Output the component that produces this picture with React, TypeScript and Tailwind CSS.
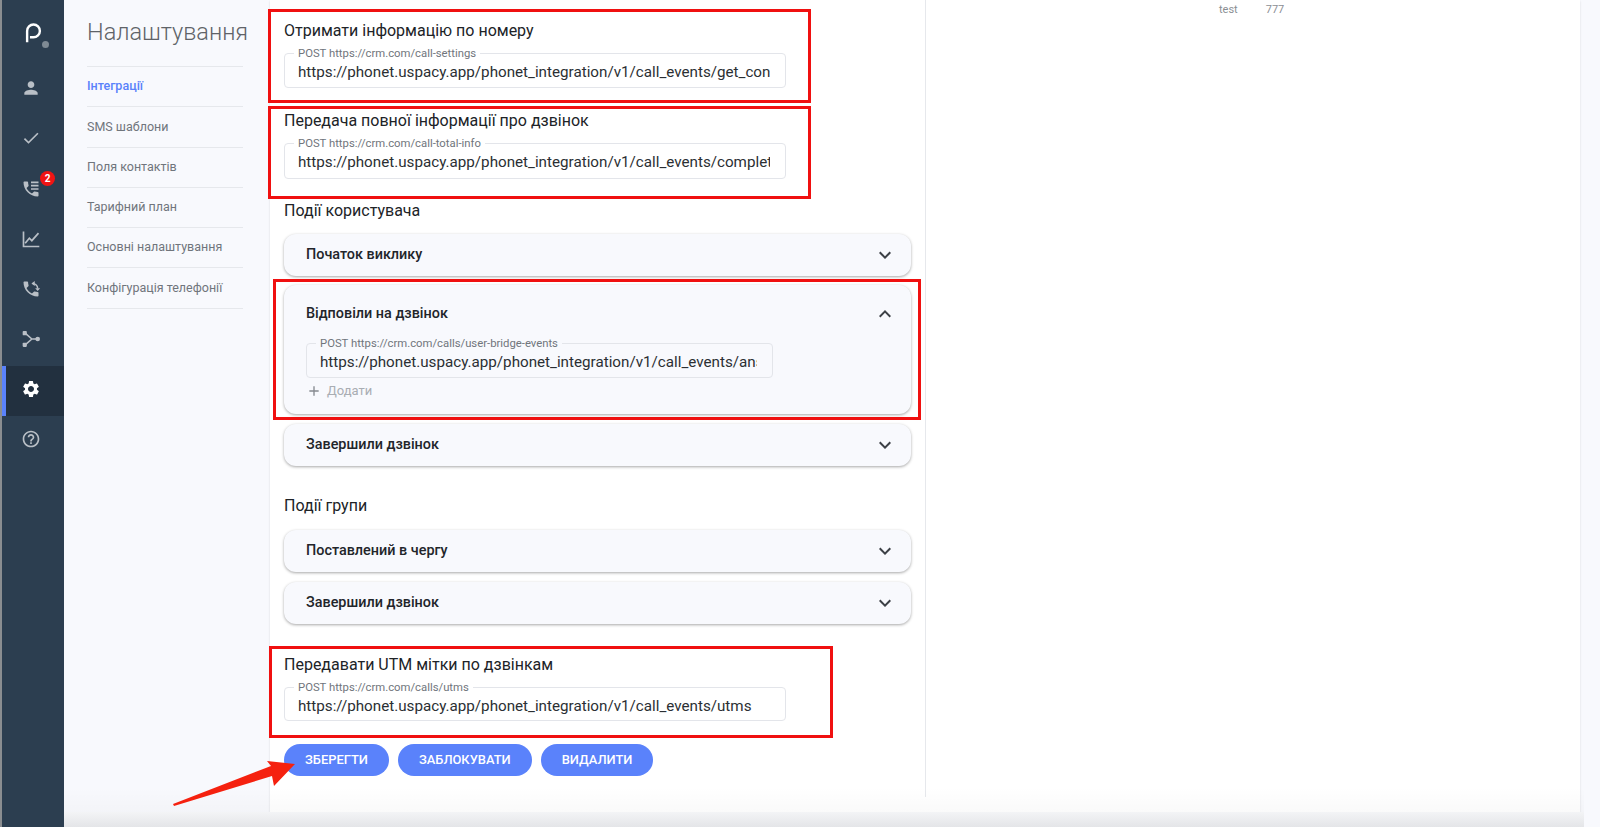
import { MdPerson, MdCheck, MdSettings, MdHelpOutline, MdExpandMore, MdExpandLess, MdAdd } from 'react-icons/md';

const phonePath =
  'M20 15.5c-1.25 0-2.45-.2-3.57-.57-.35-.11-.74-.03-1.02.24l-2.2 2.2c-2.83-1.44-5.15-3.75-6.59-6.59l2.2-2.21c.28-.26.36-.65.25-1C8.7 6.45 8.5 5.25 8.5 4c0-.55-.45-1-1-1H4c-.55 0-1 .45-1 1 0 9.39 7.61 17 17 17 .55 0 1-.45 1-1v-3.5c0-.55-.45-1-1-1z';

const PhoneListIcon = () => (
  <svg viewBox="0 0 24 24" width="20" height="20" fill="currentColor">
    <path d={phonePath} />
    <path d="M12 3h9v2h-9zM12 7h9v2h-9zM12 11h9v2h-9z" />
  </svg>
);

const PhoneSwapIcon = () => (
  <svg viewBox="0 0 24 24" width="20" height="20" fill="currentColor">
    <path d={phonePath} />
    <path d="M14 5.500a6 6 0 0 1 6 6" fill="none" stroke="currentColor" strokeWidth="1.800" />
    <path d="M16.500 2.500v6l-4-3zM17 11h6l-3 3.500z" />
  </svg>
);

const ChartIcon = () => (
  <svg viewBox="0 0 24 24" width="20" height="20" fill="none" stroke="currentColor" strokeWidth="2">
    <path d="M3 3v18h19" />
    <path d="M5 17l5-6 3 3 8-9" />
  </svg>
);

const BranchIcon = () => (
  <svg viewBox="0 0 24 24" width="20" height="20" fill="currentColor">
    <path d="M5 5l8 7-8 7M13 12h6" fill="none" stroke="currentColor" strokeWidth="1.800" />
    <rect x="2" y="2.500" width="5" height="5" rx="1" />
    <rect x="2" y="16.500" width="5" height="5" rx="1" />
    <circle cx="20" cy="12" r="2.800" />
  </svg>
);

const navItems = ['Інтеграції', 'SMS шаблони', 'Поля контактів', 'Тарифний план', 'Основні налаштування', 'Конфігурація телефонії'];

const UrlField = ({ label, value, className }: { label: string; value: string; className: string }) => (
  <fieldset className={`min-w-0 rounded border border-[#e3e5ea] ${className}`}>
    <legend className="ml-[9px] px-[4px] text-[11.300px] leading-[11px] text-[#70757c]">{label}</legend>
    <div className="pl-[13px] pr-[15px] pt-[1px]">
      <input
        readOnly
        value={value}
        className="block h-[24px] w-full bg-transparent text-[15.200px] leading-[24px] text-[#2b2f33] outline-none"
      />
    </div>
  </fieldset>
);

const AccordionHead = ({ title, open }: { title: string; open?: boolean }) => (
  <div className="flex h-[42px] items-center justify-between pl-[22px] pr-[14px]">
    <span className="text-[14.400px] font-medium text-[#22252a]">{title}</span>
    {open ? <MdExpandLess size={24} className="text-[#3c4046]" /> : <MdExpandMore size={24} className="text-[#3c4046]" />}
  </div>
);

const Accordion = ({ title, className }: { title: string; className: string }) => (
  <div className={`w-[627px] rounded-xl bg-[#f8f9fd] shadow-[0_1px_3px_rgba(0,0,0,0.35)] ${className}`}>
    <AccordionHead title={title} />
  </div>
);

export default function App() {
  return (
    <div className="relative flex h-screen overflow-hidden bg-[#f8f9fd] font-['Roboto',sans-serif]">
      <aside className="flex w-[64px] shrink-0 flex-col border-l-2 border-[#8a8d90] bg-[#2c3e50] text-[#b9bfc6]">
        <div className="relative flex h-[66px] items-center justify-center">
          <svg viewBox="0 0 24 30" width="17" height="22" fill="none" stroke="#ffffff" strokeWidth="3.400">
            <path d="M3 28V12a9 9 0 1 1 9 9H7" />
          </svg>
          <span className="absolute left-[40px] top-[41px] h-[7px] w-[7px] rounded-full bg-[#7f8a94]" />
        </div>
        <div className="flex h-[50px] items-center justify-center pb-[7px] pr-[4px]"><MdPerson size={20} /></div>
        <div className="flex h-[50px] items-center justify-center pb-[7px] pr-[4px]"><MdCheck size={20} /></div>
        <div className="relative flex h-[50px] items-center justify-center pb-[5px] pr-[4px]">
          <PhoneListIcon />
          <span className="absolute left-[38px] top-[5px] flex h-[15px] w-[15px] items-center justify-center rounded-full bg-[#f01414] text-[10px] font-bold text-white">2</span>
        </div>
        <div className="flex h-[50px] items-center justify-center pb-[5px] pr-[4px]"><ChartIcon /></div>
        <div className="flex h-[50px] items-center justify-center pb-[5px] pr-[4px]"><PhoneSwapIcon /></div>
        <div className="flex h-[50px] items-center justify-center pb-[5px] pr-[4px]"><BranchIcon /></div>
        <div className="flex h-[50px] items-center justify-center border-l-4 border-[#5a82fb] bg-[#22303f] pb-[5px] pr-[8px] text-white"><MdSettings size={20} /></div>
        <div className="flex h-[50px] items-center justify-center pb-[5px] pr-[4px]"><MdHelpOutline size={20} /></div>
      </aside>

      <nav className="w-[206px] shrink-0 pl-[23px] pr-[27px]">
        <h1 className="h-[67px] whitespace-nowrap border-b border-[#e6e8ec] pt-[15px] text-[23.500px] font-light leading-[34px] text-[#5f6368]">Налаштування</h1>
        {navItems.map((item, i) => (
          <div key={item} className={`flex h-[40.300px] items-center border-b border-[#e6e8ec] text-[12.500px] ${i === 0 ? 'font-medium text-[#5a82fb]' : 'text-[#70757c]'}`}>
            {item}
          </div>
        ))}
      </nav>

      <main className="flex h-[812px] w-[1310px] shrink-0 bg-white shadow-[0_1px_2px_rgba(0,0,0,0.12)]">
        <div className="h-[797px] w-[656px] shrink-0 border-r border-[#e6e8ec] pt-[9px]">
          <div className="ml-[-2px] h-[94px] w-[543px] border-[3px] border-[#f01010] pl-[13px] pt-[7px]">
            <div className="text-[16px] leading-[24px] text-[#202327]">Отримати інформацію по номеру</div>
            <UrlField className="mt-[5px] h-[40px] w-[502px]" label="POST https://crm.com/call-settings" value="https://phonet.uspacy.app/phonet_integration/v1/call_events/get_contact" />
          </div>
          <div className="ml-[-2px] mt-[3px] h-[93px] w-[543px] border-[3px] border-[#f01010] pl-[13px]">
            <div className="text-[16px] leading-[24px] text-[#202327]">Передача повної інформації про дзвінок</div>
            <UrlField className="mt-[5px] h-[41px] w-[502px]" label="POST https://crm.com/call-total-info" value="https://phonet.uspacy.app/phonet_integration/v1/call_events/complete" />
          </div>
          <div className="ml-[14px] text-[16px] leading-[24px] text-[#202327]">Події користувача</div>
          <Accordion className="ml-[14px] mt-[11px]" title="Початок виклику" />
          <div className="ml-[3px] mt-[3px] h-[141px] w-[648px] border-[3px] border-[#f01010] pl-[8px] pt-[3px]">
            <div className="h-[129px] w-[627px] rounded-xl bg-[#f8f9fd] shadow-[0_1px_3px_rgba(0,0,0,0.35)]">
              <div className="h-[53px]"><div className="pt-[8px]"><AccordionHead title="Відповіли на дзвінок" open /></div></div>
              <div className="pl-[22px]">
                <UrlField className="h-[40px] w-[467px]" label="POST https://crm.com/calls/user-bridge-events" value="https://phonet.uspacy.app/phonet_integration/v1/call_events/answered" />
                <div className="mt-[2px] flex h-[22px] items-center text-[13px] text-[#a9adb3]">
                  <MdAdd size={16} className="text-[#85898f]" />
                  <span className="ml-[5px]">Додати</span>
                </div>
              </div>
            </div>
          </div>
          <Accordion className="ml-[14px] mt-[4px]" title="Завершили дзвінок" />
          <div className="ml-[14px] mt-[28px] text-[16px] leading-[24px] text-[#202327]">Події групи</div>
          <Accordion className="ml-[14px] mt-[12px]" title="Поставлений в чергу" />
          <Accordion className="ml-[14px] mt-[10px]" title="Завершили дзвінок" />
          <div className="ml-[-1px] mt-[22px] h-[92px] w-[564px] border-[3px] border-[#f01010] pl-[12px] pt-[1px]">
            <div className="mt-[3px] text-[16px] leading-[24px] text-[#202327]">Передавати UTM мітки по дзвінкам</div>
            <UrlField className="mt-[5px] h-[39px] w-[502px]" label="POST https://crm.com/calls/utms" value="https://phonet.uspacy.app/phonet_integration/v1/call_events/utms" />
          </div>
          <div className="ml-[14px] mt-[6px] flex gap-[9px]">
            {['Зберегти', 'Заблокувати', 'Видалити'].map((b) => (
              <button key={b} className="h-[32px] rounded-full bg-[#5a82fb] px-[21px] text-[12.900px] font-medium uppercase text-white">{b}</button>
            ))}
          </div>
        </div>
        <div className="relative flex-1">
          <div className="absolute left-[293px] top-[3px] flex gap-[28px] text-[11px] leading-[14px] text-[#8b8f94]">
            <span>test</span>
            <span>777</span>
          </div>
        </div>
      </main>

      <div className="pointer-events-none absolute bottom-[15px] left-[64px] right-[16px] h-[25px] bg-gradient-to-b from-transparent to-black/[0.02]" />
      <div className="pointer-events-none absolute bottom-0 left-[64px] right-[16px] h-[15px] bg-gradient-to-b from-[#f3f4f6] to-[#e4e5e8]" />

      <svg className="pointer-events-none absolute left-[170px] top-[740px]" width="127" height="70" viewBox="0 0 127 70">
        <path d="M3 64L101 26L97 21L125 24L104 46L102 36L4 66Z" fill="#f5210f" />
      </svg>
    </div>
  );
}
